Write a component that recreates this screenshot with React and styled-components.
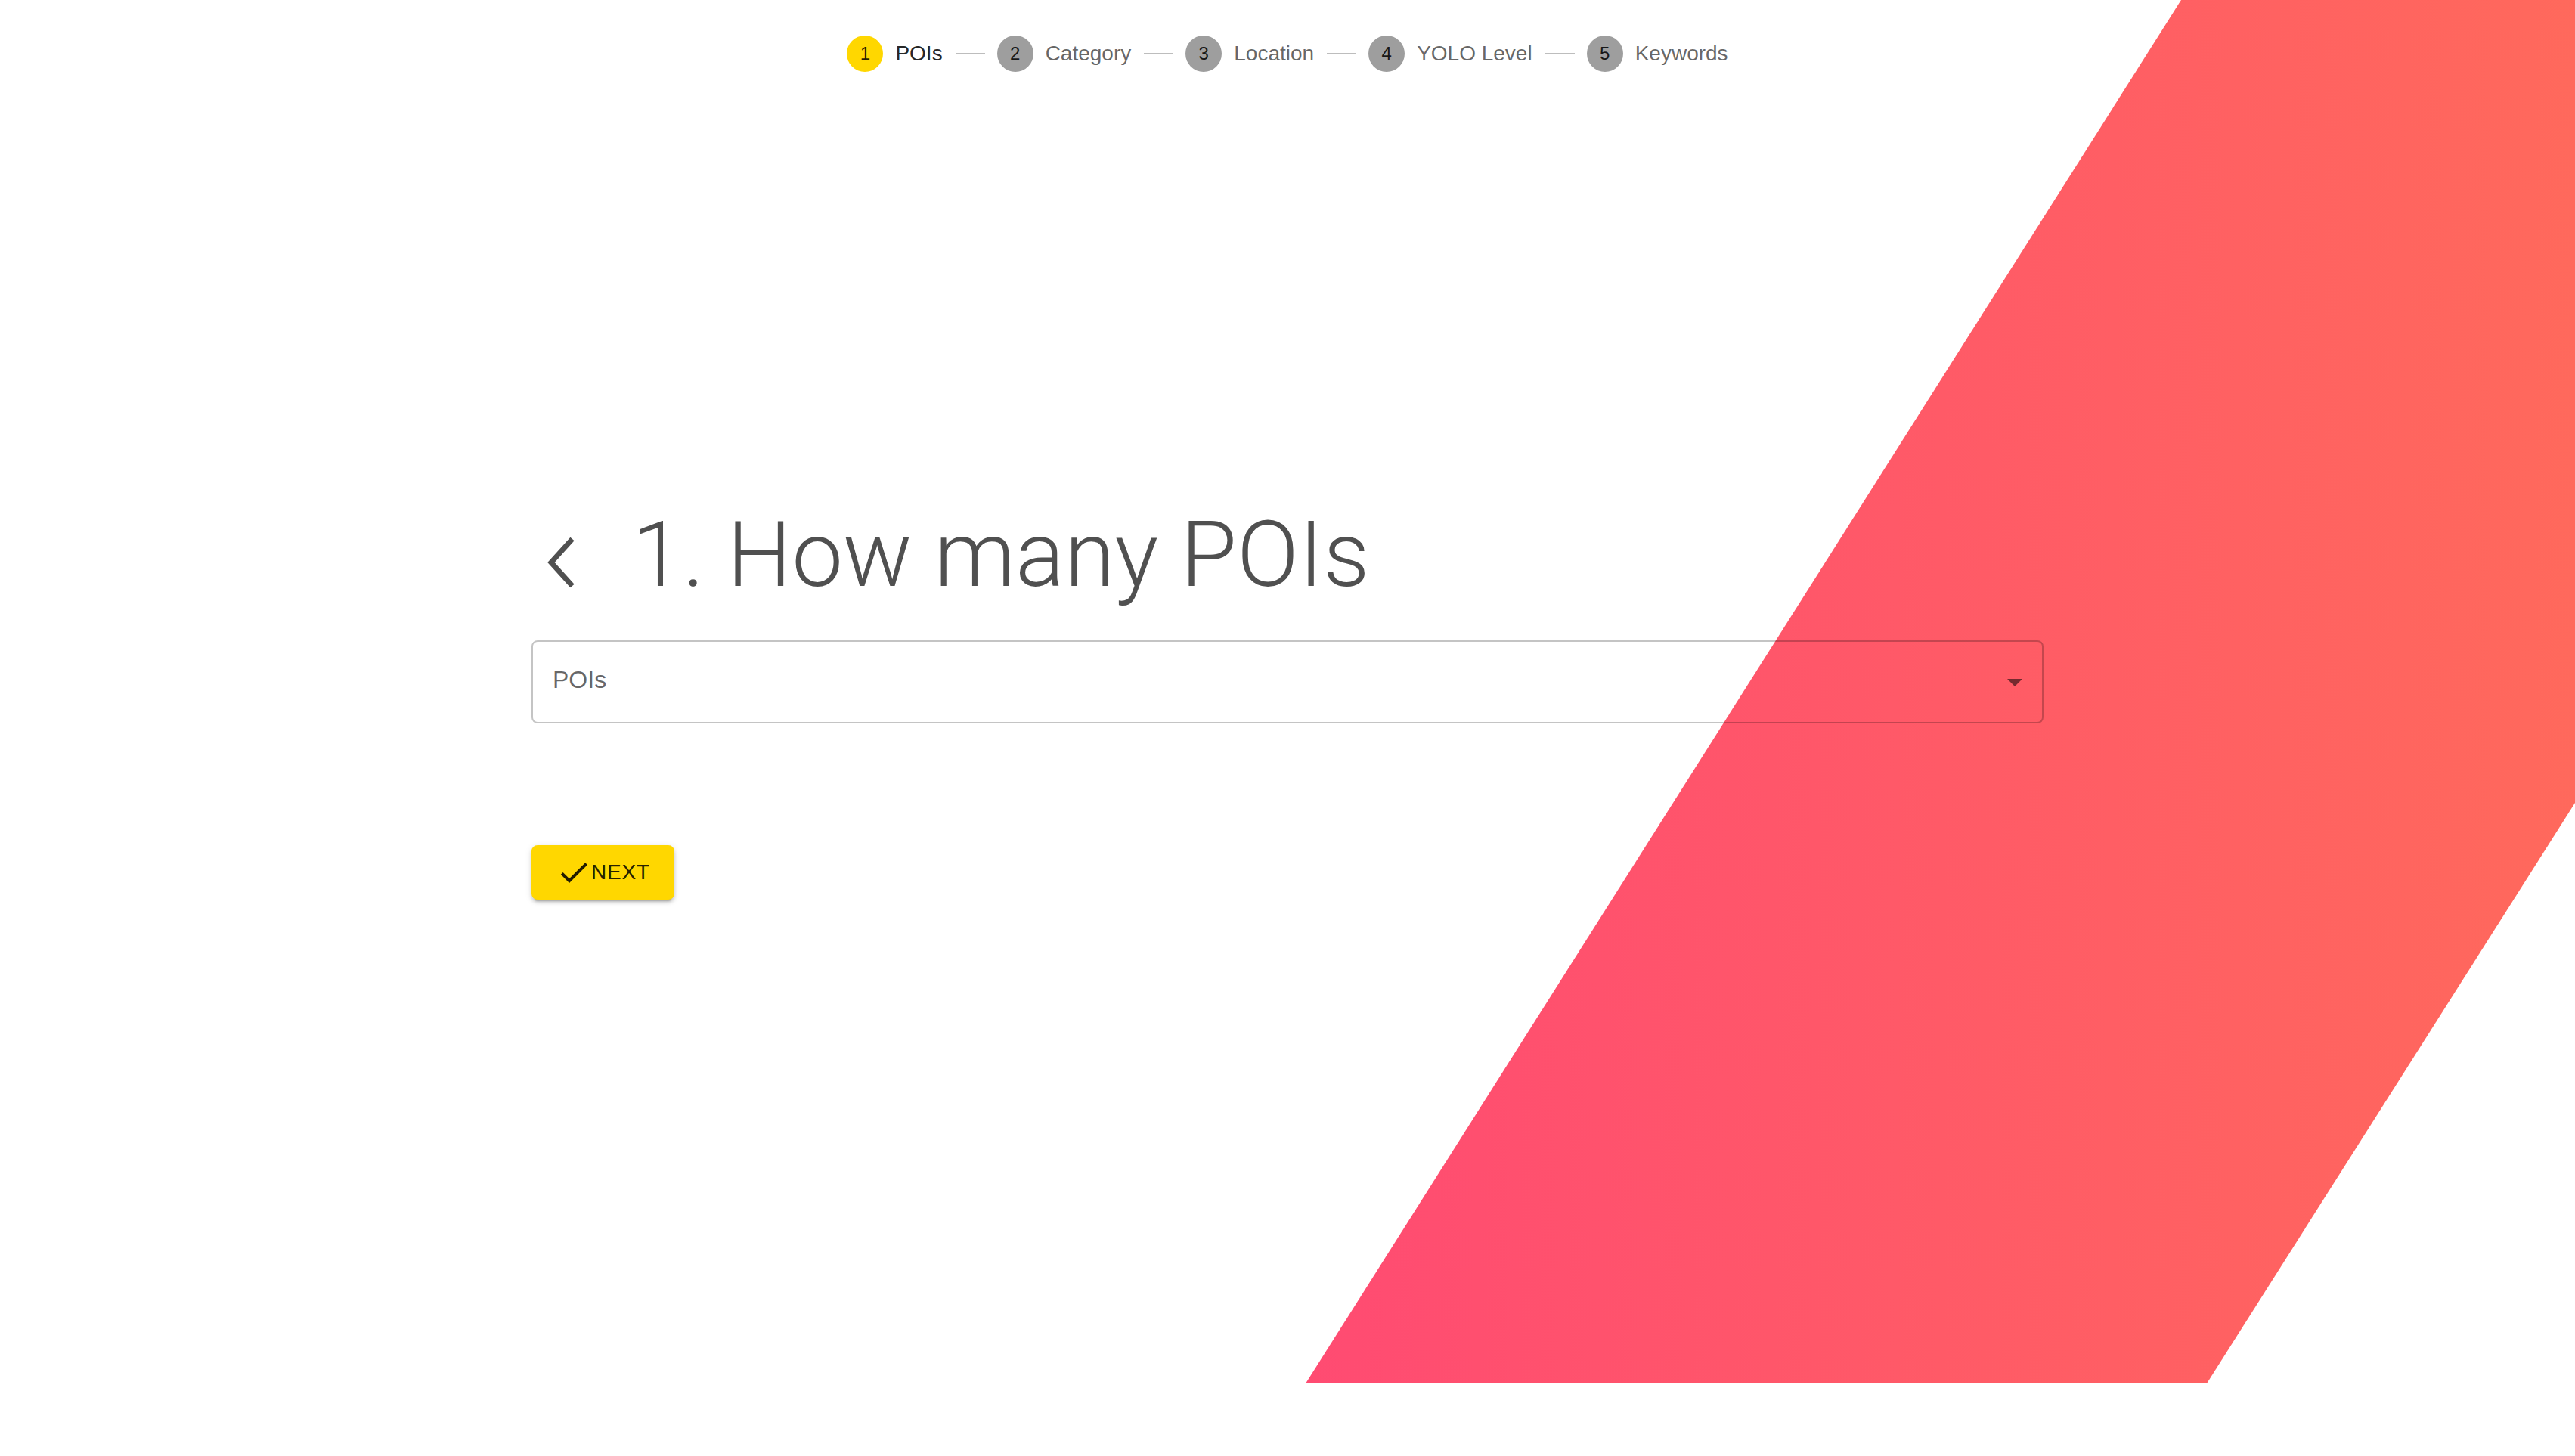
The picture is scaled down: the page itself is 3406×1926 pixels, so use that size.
import React from 'react';
import styled, { createGlobalStyle } from 'styled-components';

const STEPS = ['POIs', 'Category', 'Location', 'YOLO Level', 'Keywords'];
const ACTIVE_STEP = 0;

const GlobalStyle = createGlobalStyle`
  html, body {
    margin: 0;
    padding: 0;
    background: #fff;
  }
  body {
    font-family: "Liberation Sans", Arial, sans-serif;
  }
`;

const App = () => {
  return (
    <>
      <GlobalStyle />
      <Page>
        <Backdrop viewBox="0 0 3406 1830" aria-hidden="true">
          <defs>
            <linearGradient
              id="swoosh"
              gradientUnits="userSpaceOnUse"
              x1="1727"
              y1="0"
              x2="3406"
              y2="0"
            >
              <stop offset="0" stopColor="#FF4B72" />
              <stop offset="1" stopColor="#FF695C" />
            </linearGradient>
          </defs>
          <polygon
            points="2885,0 3406,0 3406,1062 2919,1830 1727,1830"
            fill="url(#swoosh)"
          />
        </Backdrop>

        <Stepper>
          {STEPS.map((label, i) => (
            <React.Fragment key={label}>
              {i > 0 && <Connector />}
              <Step>
                <StepIcon active={i === ACTIVE_STEP}>{i + 1}</StepIcon>
                <StepLabel active={i === ACTIVE_STEP}>{label}</StepLabel>
              </Step>
            </React.Fragment>
          ))}
        </Stepper>

        <Content>
          <Heading>
            <BackIcon viewBox="0 0 44 70" aria-hidden="true">
              <polyline points="37,4 9,35 37,66" />
            </BackIcon>
            <Title>1. How many POIs</Title>
          </Heading>

          <Select>
            <SelectLabel>POIs</SelectLabel>
            <ArrowIcon viewBox="0 0 24 24" aria-hidden="true">
              <path d="M7 10l5 5 5-5z" />
            </ArrowIcon>
          </Select>

          <Actions>
            <NextButton type="button">
              <CheckIcon viewBox="0 0 24 24" aria-hidden="true">
                <path d="M9 16.17 4.83 12l-1.42 1.41L9 19 21 7l-1.41-1.41z" />
              </CheckIcon>
              NEXT
            </NextButton>
          </Actions>
        </Content>
      </Page>
    </>
  );
};

const Page = styled.div`
  position: relative;
  width: 100%;
  height: 1830px;
  overflow: hidden;
  background: #fff;
`;

// decorative swoosh sits behind everything
const Backdrop = styled.svg`
  position: absolute;
  top: 0;
  left: 0;
  width: 3406px;
  height: 1830px;
  z-index: 0;
`;

const Stepper = styled.div`
  position: relative;
  z-index: 1;
  display: flex;
  justify-content: center;
  align-items: center;
  padding-top: 47px;
`;

const Step = styled.div`
  display: flex;
  align-items: center;
  gap: 16px;
`;

const StepIcon = styled.div`
  width: 48px;
  height: 48px;
  border-radius: 50%;
  display: flex;
  align-items: center;
  justify-content: center;
  background: ${(p) => (p.active ? '#FFD700' : '#9E9E9E')};
  color: rgba(0, 0, 0, 0.87);
  font-size: 24px;
`;

const StepLabel = styled.span`
  font-size: 28px;
  line-height: 48px;
  color: ${(p) => (p.active ? 'rgba(0, 0, 0, 0.87)' : 'rgba(0, 0, 0, 0.6)')};
`;

const Connector = styled.span`
  width: 39px;
  height: 2px;
  margin: 0 16px 0 17px;
  background: #bdbdbd;
`;

const Content = styled.main`
  position: relative;
  z-index: 1;
  width: 2000px;
  margin: 567px auto 0;
`;

const Heading = styled.h1`
  display: flex;
  align-items: center;
  height: 144px;
  margin: 0;
`;

const BackIcon = styled.svg`
  width: 44px;
  height: 70px;
  margin: 20px 0 0 17px;
  flex-shrink: 0;

  polyline {
    fill: none;
    stroke: #505050;
    stroke-width: 7;
  }
`;

const Title = styled.span`
  margin-left: 72px;
  font-family: Roboto, "Liberation Sans", Arial, sans-serif;
  font-weight: 300;
  font-size: 121px;
  line-height: 144px;
  color: #505050;
  white-space: nowrap;
`;

const Select = styled.div`
  box-sizing: border-box;
  display: flex;
  align-items: center;
  justify-content: space-between;
  height: 110px;
  margin-top: 41px;
  padding: 0 12px 6px 26px;
  border: 2px solid rgba(0, 0, 0, 0.23);
  border-radius: 8px;
  background: transparent;
`;

const SelectLabel = styled.span`
  font-size: 32px;
  color: rgba(0, 0, 0, 0.6);
`;

const ArrowIcon = styled.svg`
  width: 48px;
  height: 48px;
  margin-top: 6px;
  fill: rgba(0, 0, 0, 0.54);
`;

const Actions = styled.div`
  margin-top: 161px;
`;

const NextButton = styled.button`
  display: inline-flex;
  align-items: center;
  height: 72px;
  padding: 0 32px;
  border: none;
  border-radius: 8px;
  background: #FFD700;
  color: rgba(0, 0, 0, 0.87);
  font-family: "Liberation Sans", Arial, sans-serif;
  font-size: 28px;
  letter-spacing: 0.8px;
  box-shadow: 0 6px 2px -4px rgba(0, 0, 0, 0.2),
    0 4px 4px 0 rgba(0, 0, 0, 0.14), 0 2px 10px 0 rgba(0, 0, 0, 0.12);
  cursor: pointer;
`;

const CheckIcon = styled.svg`
  width: 48px;
  height: 48px;
  margin-right: -1px;
  fill: rgba(0, 0, 0, 0.87);
`;

export default App;
